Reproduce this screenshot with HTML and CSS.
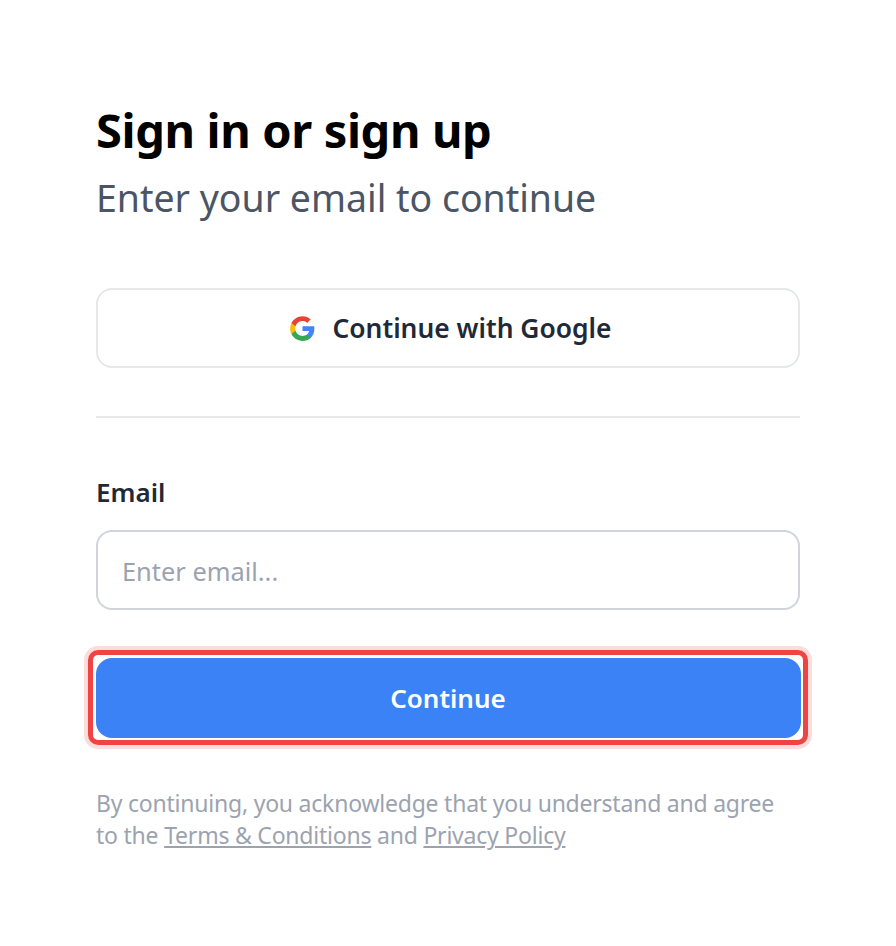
FILE: index.html
```html
<!DOCTYPE html>
<html lang="en">
<head>
<meta charset="utf-8">
<title>Sign in</title>
<link rel="stylesheet" href="styles.css">
</head>
<body>
<main class="card">
  <header class="head">
    <h1 class="title">Sign in or sign up</h1>
    <p class="subtitle">Enter your email to continue</p>
  </header>
  <button class="btn-google" type="button">
    <svg class="g-icon" viewBox="0 0 24 24" aria-hidden="true">
      <path fill="#4285F4" d="M22.56 12.25c0-.78-.07-1.53-.2-2.25H12v4.26h5.92c-.26 1.37-1.04 2.53-2.21 3.31v2.77h3.57c2.08-1.92 3.28-4.74 3.28-8.09z"/>
      <path fill="#34A853" d="M12 23c2.97 0 5.46-.98 7.28-2.66l-3.57-2.77c-.98.66-2.23 1.06-3.71 1.06-2.86 0-5.29-1.93-6.16-4.53H2.18v2.84C3.99 20.53 7.7 23 12 23z"/>
      <path fill="#FBBC05" d="M5.84 14.09c-.22-.66-.35-1.36-.35-2.09s.13-1.43.35-2.09V7.07H2.18C1.43 8.55 1 10.22 1 12s.43 3.45 1.18 4.93l2.85-2.22.81-.62z"/>
      <path fill="#EA4335" d="M12 5.38c1.62 0 3.06.56 4.21 1.64l3.15-3.15C17.45 2.09 14.97 1 12 1 7.7 1 3.99 3.47 2.18 7.07l3.66 2.84c.87-2.6 3.3-4.53 6.16-4.53z"/>
    </svg>
    <span>Continue with Google</span>
  </button>
  <hr class="divider">
  <form class="form">
    <label class="label" for="email">Email</label>
    <input class="input" id="email" type="email" placeholder="Enter email...">
    <button class="btn-primary" type="button">Continue</button>
  </form>
  <p class="legal">By continuing, you acknowledge that you understand and agree<br>to the <a href="#">Terms &amp; Conditions</a> and <a href="#">Privacy Policy</a></p>
</main>
</body>
</html>
```
FILE: styles.css
```css
* { box-sizing: border-box; }
html, body { margin: 0; background: #fff; }
body { font-family: "Noto Sans", "Open Sans", sans-serif; }
.card { width: 896px; padding: 102px 96px 0; }
.title { margin: 0; font-size: 47px; line-height: 56px; font-weight: 700; color: #000; letter-spacing: -0.38px; }
.subtitle { margin: 16px 0 0; font-size: 37.45px; line-height: 48px; font-weight: 400; color: #4b5563; }
.btn-google {
  display: flex; align-items: center; justify-content: center; gap: 16px;
  width: 100%; height: 80px; margin-top: 66px; padding: 0 0 0 5px;
  background: #fff; border: 2px solid #e5e7eb; border-radius: 16px;
  font: 600 26.4px/36px "Noto Sans", sans-serif; color: #1f2937;
}
.g-icon { width: 27px; height: 27px; }
.divider { margin: 48px 0 0; height: 2px; border: 0; background: #e5e7eb; }
.form { display: flex; flex-direction: column; margin-top: 56px; }
.label { font-size: 26px; line-height: 36px; font-weight: 600; color: #1f2937; }
.input {
  height: 80px; margin-top: 20px; padding: 2px 24px 0;
  border: 2px solid #d1d5db; border-radius: 16px;
  font: 400 25.4px "Noto Sans", sans-serif; color: #1f2937; outline: none;
}
.input::placeholder { color: #9ca3af; opacity: 1; }
.btn-primary {
  position: relative;
  height: 80px; margin: 48px -1px 0 0; padding: 0 1px 0 0;
  background: #3b82f6; border: 0; border-radius: 16px; color: #fff;
  font: 600 26px/36px "Noto Sans", sans-serif;
}
.btn-primary::after {
  content: ""; position: absolute; inset: -8px -7px -7px -8px;
  border: 5px solid #ef4444; border-radius: 10px;
  box-shadow: 0 0 0 4px #fddcdc;
  pointer-events: none;
}
.legal { margin: 49px 0 0; font-size: 23px; line-height: 32px; color: #9ca3af; letter-spacing: -0.22px; white-space: nowrap; }
.legal a { color: inherit; text-decoration: underline; }
```
